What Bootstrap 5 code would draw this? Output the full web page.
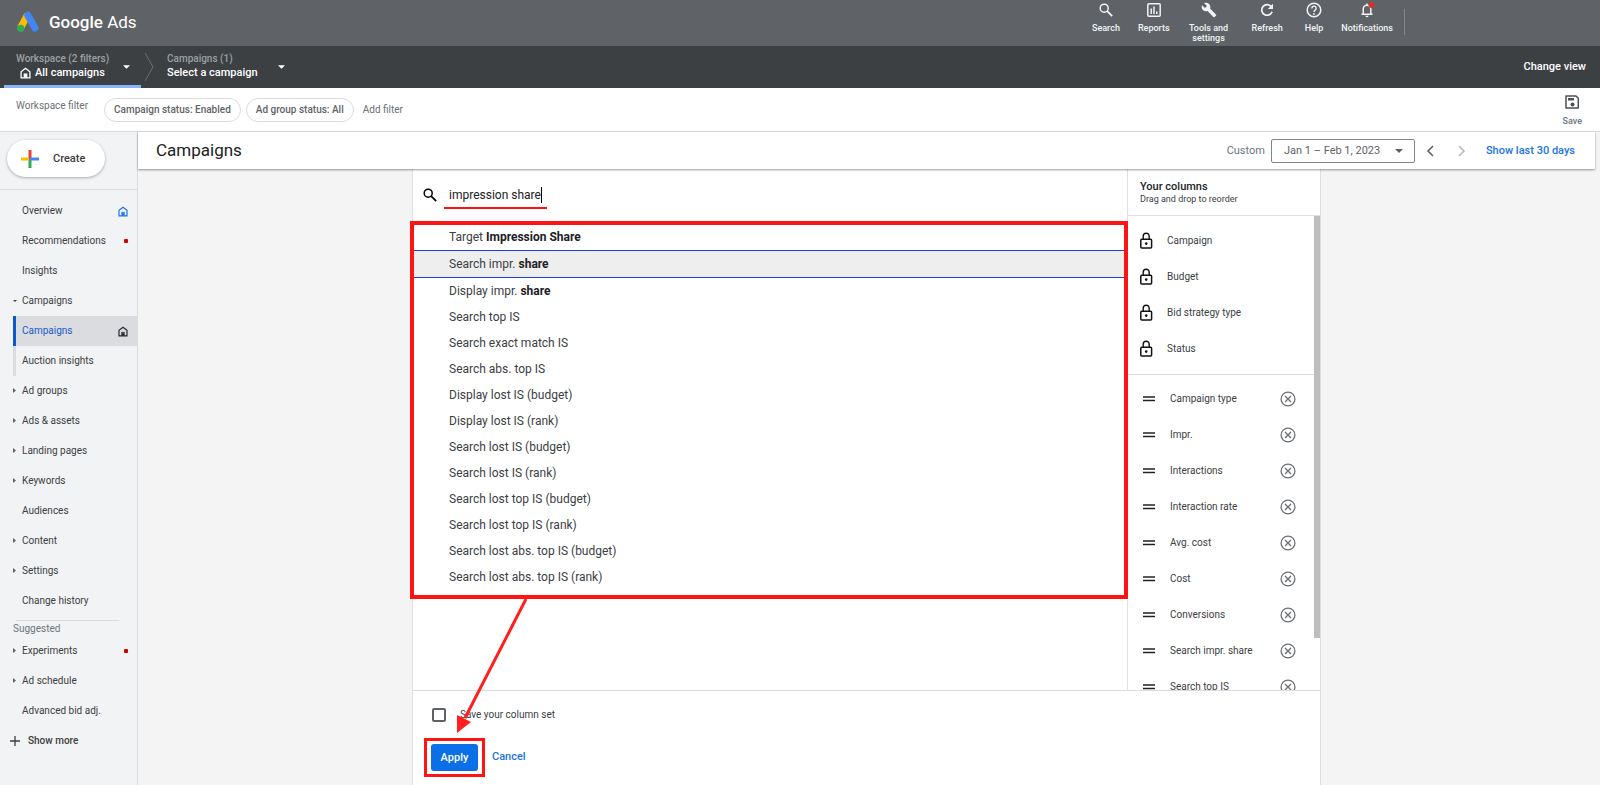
<!DOCTYPE html>
<html lang="en">
<head>
<meta charset="utf-8">
<meta name="viewport" content="width=device-width, initial-scale=1">
<title>Campaigns - Google Ads</title>
<link href="https://cdn.jsdelivr.net/npm/bootstrap@5.3.0/dist/css/bootstrap.min.css" rel="stylesheet">
<style>
body{font-family:Roboto,"Liberation Sans",sans-serif;font-size:10px;line-height:16px;color:#3c4043;height:100vh;overflow:hidden}
button{font:inherit;color:inherit;background:none;border:0;padding:0}
a{text-decoration:none}
svg{display:block;flex:none}
.fw-med{font-weight:500}
.fs-11{font-size:11px}
/* top bar */
.topbar{background:#5f6368;height:46px;color:#f1f3f4;padding:0 195px 0 16px}
.brand{font-size:17px;color:#fff;gap:9px;padding-bottom:2px}
.tools{gap:18px}
.tool{font-size:9px;line-height:10px;font-weight:500;padding-top:2px;gap:5px;color:#f1f3f4}
.tool .tw{width:42px}
.tooldiv{width:1px;height:26px;background:#85898d;margin:9px 0 0 11px}
/* workspace bar */
.scopebar{background:#3c4043;height:42px;color:#fff;padding:0 14px 0 4px}
.scope{height:42px;padding:6px 11px 0 12px;line-height:14px;text-align:left}
.scope small{font-size:10px;color:#9aa0a6;display:block}
.scope .caret{margin-top:13px}
.scope-on{width:137px;border-bottom:3px solid #8ab4f8;border-radius:3px 3px 0 0}
/* filters */
.filters{height:44px;border-bottom:1px solid #dadce0;color:#6b7075;padding:0 18px 0 16px}
.pill{height:24px;border:1px solid #dadce0;border-radius:12px;padding:0 9px;margin-right:5px;color:#5f6368;font-weight:500}
/* side navigation */
.side{width:138px;background:#f1f3f4;border-right:1px solid #dadce0}
.sidenav{padding-top:6px}
.createbox{padding:8px 7px 12px;border-bottom:1px solid #dadce0}
.create{width:98px;height:37px;border-radius:19px;background:#fff;box-shadow:0 1px 3px #3c404366;padding-left:14px;gap:14px;font-size:11px;font-weight:500}
.navrow{height:30px;padding:0 9px 0 13px;color:#3c4043}
.navrow .tri{width:9px}
.navrow .dot{width:4px;height:4px;border-radius:1px;background:#d50000;margin-left:auto}
.navrow svg.home{margin-left:auto}
.navsub{margin-left:13px;padding-left:6px;border-left:3px solid #dadce0}
.navsub.on{background:#dadce0;border-left-color:#1155cc;color:#1a5ac8}
.rule{margin:4px 18px 0 16px;border-top:1px solid #dadce0}
.suggested{padding-left:13px;line-height:15px}
.more{padding-left:10px;gap:8px}
/* page heading */
.stage{background:#f4f4f4;padding-right:5px}
.titlebar{height:37px;background:#fff;box-shadow:0 1px 2px #0006;padding:0 20px 0 18px;z-index:2}
.titlebar h1{font-size:17px;font-weight:400;color:#202124}
.datesel{width:144px;height:24px;border:1px solid #80868b;border-radius:2px;font-size:11px;padding:0 12px;color:#5f6368;line-height:16px;background:#fff url("data:image/svg+xml,%3Csvg xmlns='http://www.w3.org/2000/svg' viewBox='0 0 8 4'%3E%3Cpath d='M0 0h8L4 4z' fill='%235f6368'/%3E%3C/svg%3E") no-repeat right 11px center/8px 4px;margin:0 7px 0 6px}
.blue{color:#1a73e8}
/* column picker */
.picker{max-width:909px;min-height:0;background:#fff;border:solid #e0e0e0;border-width:0 1px}
.finder{height:52px;padding:0 10px;gap:7px}
.findwrap{border-bottom:2px solid #f11;padding:6px 5px 0;height:28px}
.findwrap input{display:block;width:93px;height:16px;border:0;border-right:1px solid #000;padding:0;font-size:12px;color:#202124;outline:0;background:none}
.results{border:4px solid #ff1414;margin:0 -1px 0 -3px;padding-bottom:5px;font-size:12px;color:#3c4043;position:relative;z-index:1}
.results li{line-height:26px;padding-left:35px}
.results li:first-child{line-height:25px}
.results li.cur{background:#eee;border:solid #1a3fc8;border-width:1px 0}
.results b{color:#202124}
.cols{width:193px;border-left:1px solid #e0e0e0}
.colhead{height:47px;border-bottom:1px solid #e0e0e0;padding:11px 12px 0;font-size:9px;line-height:13px}
.collist{overflow:hidden;flex:1 1 0;min-height:0;color:#3c4043}
.locked{padding:7px 0;border-bottom:1px solid #dadce0}
.locked li{height:36px;padding:0 12px 0 11px;gap:14px}
.free{padding-top:6px}
.free li{height:36px;padding:0 18px 0 15px;gap:15px}
.thumb{width:6px;height:422px;background:#bdbdbd}
.pickfoot{height:95px;border-top:1px solid #dadce0;padding:16px 11px 0}
.pickfoot input{appearance:none;width:14px;height:14px;border:2px solid #5f6368;border-radius:2px;margin:0 14px 0 8px}
.ring{border:3px solid #ff1414;padding:3px 4px;margin-top:15px}
.apply{width:47px;height:27px;background:#0b70e8;color:#fff;border-radius:3px;font-size:11px;font-weight:500}
.cancel{margin:14px 0 0 7px}
.arrow{position:absolute;left:39px;top:-92px;z-index:3}
</style>
</head>
<body class="d-flex flex-column">
<svg width="0" height="0" class="position-absolute">
<symbol id="home" viewBox="0 0 12 12"><path d="M1.2 11.2V4.6L6 .9l4.800 3.700v6.600z" fill="none" stroke="currentColor" stroke-width="1.400"/><path d="M4 11V6.500h4V11z" fill="currentColor"/><path d="M5.200 7.700h1.600" stroke="#fff" stroke-width=".6"/></symbol>
<symbol id="search" viewBox="0 0 14 14"><circle cx="5.200" cy="5.200" r="4" fill="none" stroke="currentColor" stroke-width="1.500"/><path d="M8.200 8.200l5 5" stroke="currentColor" stroke-width="1.800"/></symbol>
<symbol id="lock" viewBox="0 0 14 18"><rect x="1.800" y="7.200" width="10.800" height="8.800" rx="1" fill="none" stroke="#111" stroke-width="1.500"/><path d="M4.200 7V4.200a3 3 0 0 1 6 0V7" fill="none" stroke="#111" stroke-width="1.400"/><circle cx="7.200" cy="11.600" r="1.300" fill="#111"/></symbol>
<symbol id="grip" viewBox="0 0 12 6"><path d="M0 1h12M0 4.500h12" stroke="#222" stroke-width="1.400"/></symbol>
<symbol id="remove" viewBox="0 0 16 16"><circle cx="8" cy="8" r="6.900" fill="none" stroke="#6b6f73" stroke-width="1.300"/><path d="M5 5l6 6M11 5l-6 6" stroke="#6b6f73" stroke-width="1.300"/></symbol>
<symbol id="right" viewBox="0 0 4 6"><path d="M0 0l3 2.500L0 5z" fill="#5f6368"/></symbol>
<symbol id="down" viewBox="0 0 8 4"><path d="M0 0h8L4 4z" fill="currentColor"/></symbol>
</svg>

<header class="topbar d-flex flex-shrink-0">
  <a href="#" class="brand d-flex align-items-center me-auto">
    <svg width="24" height="22" viewBox="0 0 24 22"><path d="M11.500 4L4.500 17" stroke="#fbbc04" stroke-width="7"/><path d="M11.800 4.200L19 17" stroke="#4285f4" stroke-width="7" stroke-linecap="round"/><circle cx="4.700" cy="17.300" r="3.600" fill="#34a853"/></svg>
    <span><span class="fw-med">Google</span> Ads</span></a>
  <div class="tools d-flex">
    <button class="tool d-flex flex-column align-items-center"><svg width="16" height="16" viewBox="-1 -1 16 16"><use href="#search" width="14" height="14"/></svg>Search</button>
    <button class="tool d-flex flex-column align-items-center"><svg width="16" height="16" viewBox="0 0 16 16"><rect x="1.800" y="1.800" width="12.400" height="12.400" rx="1" fill="none" stroke="currentColor" stroke-width="1.500"/><path d="M5.200 6.500V12M8 4.500V12M10.800 9.500V12" stroke="currentColor" stroke-width="1.500"/></svg>Reports</button>
    <button class="tool d-flex flex-column align-items-center me-1"><svg width="16" height="16" viewBox="0 0 24 24"><path fill="currentColor" d="M22.700 19l-9.100-9.100c.9-2.300.4-5-1.500-6.900-2-2-5-2.400-7.400-1.300L9 6 6 9 1.600 4.700C.4 7.100.9 10.100 2.900 12.100c1.900 1.900 4.600 2.400 6.900 1.500l9.100 9.100c.4.4 1 .4 1.400 0l2.300-2.300c.5-.4.5-1.100.1-1.400z"/></svg><span class="tw">Tools and settings</span></button>
    <button class="tool d-flex flex-column align-items-center"><svg width="16" height="16" viewBox="0 0 16 16"><path d="M12.300 4.700A5.300 5.300 0 1 0 13.100 9.700" fill="none" stroke="currentColor" stroke-width="1.700"/><path d="M14 1.800V7H8.800z" fill="currentColor"/></svg>Refresh</button>
    <button class="tool d-flex flex-column align-items-center ms-1"><svg width="16" height="16" viewBox="0 0 16 16"><circle cx="8" cy="8" r="6.800" fill="none" stroke="currentColor" stroke-width="1.500"/><path d="M5.800 6.500a2.200 2.200 0 1 1 3.400 1.700C8.300 8.800 8 9.100 8 10" fill="none" stroke="currentColor" stroke-width="1.400"/><circle cx="8" cy="12" r=".9" fill="currentColor"/></svg>Help</button>
    <button class="tool d-flex flex-column align-items-center"><svg width="16" height="16" viewBox="0 0 16 16"><path d="M4.200 12V7a3.800 3.800 0 0 1 7.600 0v5M2.500 12.200h11M8 1.500v2" fill="none" stroke="currentColor" stroke-width="1.500"/><path d="M6.500 13.800h3a1.500 1.500 0 0 1-3 0z" fill="currentColor"/><circle cx="12.500" cy="3" r="3" fill="#d93025"/></svg>Notifications</button>
  </div>
  <div class="tooldiv"></div>
</header>

<nav class="scopebar d-flex flex-shrink-0 align-items-center">
  <button class="scope scope-on d-flex">
    <span class="fs-11 fw-med"><small>Workspace (2 filters)</small><span class="d-flex gap-1 align-items-center"><svg class="ms-1" width="11" height="12"><use href="#home"/></svg>All campaigns</span></span>
    <svg class="ms-auto caret" width="7" height="4"><use href="#down"/></svg></button>
  <svg class="ms-1" width="10" height="30" viewBox="0 0 10 30"><path d="M0 1l8 14-8 14" fill="none" stroke="#6b7075"/></svg>
  <button class="scope d-flex gap-3"><span class="fs-11 fw-med"><small>Campaigns (1)</small>Select a campaign</span><svg class="ms-1 caret" width="7" height="4"><use href="#down"/></svg></button>
  <button class="ms-auto fs-11 fw-med">Change view</button>
</nav>

<div class="filters d-flex flex-shrink-0 align-items-center">
  <span class="pb-2 me-3">Workspace filter</span>
  <button class="pill">Campaign status: Enabled</button>
  <button class="pill">Ad group status: All</button>
  <button class="ms-1">Add filter</button>
  <button class="ms-auto d-flex flex-column align-items-center gap-1"><svg width="16" height="16" viewBox="0 0 16 16"><path d="M2 2h10l2.300 2.300V14H2z" fill="none" stroke="#4d5156" stroke-width="1.500" stroke-linejoin="round"/><path d="M4 4h6v2.500H4z" fill="#4d5156"/><circle cx="8.500" cy="10.500" r="2" fill="#4d5156"/></svg><span class="tool pb-0 text-secondary">Save</span></button>
</div>

<div class="d-flex flex-fill" style="min-height:0">
<aside class="side flex-shrink-0">
  <div class="createbox"><button class="create d-flex align-items-center"><svg width="18" height="18" viewBox="0 0 18 18"><path d="M9 0v9" stroke="#ea4335" stroke-width="3"/><path d="M9 9v9" stroke="#34a853" stroke-width="3"/><path d="M0 9h8" stroke="#fbbc04" stroke-width="3"/><path d="M9 9h9" stroke="#4285f4" stroke-width="3"/></svg>Create</button></div>
  <nav class="sidenav d-flex flex-column">
    <a href="#" class="navrow d-flex align-items-center"><span class="tri"></span>Overview<svg class="home blue" width="10" height="11"><use href="#home"/></svg></a>
    <a href="#" class="navrow d-flex align-items-center"><span class="tri"></span>Recommendations<span class="dot"></span></a>
    <a href="#" class="navrow d-flex align-items-center"><span class="tri"></span>Insights</a>
    <a href="#" class="navrow d-flex align-items-center"><span class="tri"><svg width="4" height="2"><use href="#down"/></svg></span>Campaigns</a>
    <a href="#" class="navrow navsub on d-flex align-items-center">Campaigns<svg class="home text-dark" width="10" height="11"><use href="#home"/></svg></a>
    <a href="#" class="navrow navsub d-flex align-items-center">Auction insights</a>
    <a href="#" class="navrow d-flex align-items-center"><span class="tri"><svg width="4" height="6"><use href="#right"/></svg></span>Ad groups</a>
    <a href="#" class="navrow d-flex align-items-center"><span class="tri"><svg width="4" height="6"><use href="#right"/></svg></span>Ads &amp; assets</a>
    <a href="#" class="navrow d-flex align-items-center"><span class="tri"><svg width="4" height="6"><use href="#right"/></svg></span>Landing pages</a>
    <a href="#" class="navrow d-flex align-items-center"><span class="tri"><svg width="4" height="6"><use href="#right"/></svg></span>Keywords</a>
    <a href="#" class="navrow d-flex align-items-center"><span class="tri"></span>Audiences</a>
    <a href="#" class="navrow d-flex align-items-center"><span class="tri"><svg width="4" height="6"><use href="#right"/></svg></span>Content</a>
    <a href="#" class="navrow d-flex align-items-center"><span class="tri"><svg width="4" height="6"><use href="#right"/></svg></span>Settings</a>
    <a href="#" class="navrow d-flex align-items-center"><span class="tri"></span>Change history</a>
    <div class="rule"></div>
    <span class="text-secondary suggested">Suggested</span>
    <a href="#" class="navrow d-flex align-items-center"><span class="tri"><svg width="4" height="6"><use href="#right"/></svg></span>Experiments<span class="dot"></span></a>
    <a href="#" class="navrow d-flex align-items-center"><span class="tri"><svg width="4" height="6"><use href="#right"/></svg></span>Ad schedule</a>
    <a href="#" class="navrow d-flex align-items-center"><span class="tri"></span>Advanced bid adj.</a>
    <button class="navrow more d-flex align-items-center fw-med"><svg width="10" height="10" viewBox="0 0 10 10"><path d="M5 0v10M0 5h10" stroke="#3c4043" stroke-width="1.300"/></svg>Show more</button>
  </nav>
</aside>

<main class="d-flex flex-column flex-fill stage">
  <div class="titlebar position-relative d-flex align-items-center flex-shrink-0">
    <h1 class="m-0 me-auto">Campaigns</h1>
    <label for="range" class="fs-11 text-secondary">Custom</label>
    <select id="range" class="form-select datesel"><option>Jan 1 – Feb 1, 2023</option></select>
    <button class="px-1" aria-label="Previous"><svg width="8" height="12" viewBox="0 0 8 12"><path d="M7 1L2 6l5 5" fill="none" stroke="#5f6368" stroke-width="1.600"/></svg></button>
    <button class="mx-3 px-1" aria-label="Next"><svg width="8" height="12" viewBox="0 0 8 12"><path d="M1 1l5 5-5 5" fill="none" stroke="#b4b7ba" stroke-width="1.600"/></svg></button>
    <a href="#" class="fs-11 fw-med blue">Show last 30 days</a>
  </div>
  <section class="picker w-100 mx-auto flex-fill d-flex flex-column">
    <div class="d-flex flex-fill" style="min-height:0">
      <div class="flex-fill">
        <div class="finder d-flex align-items-center">
          <svg width="14" height="14" class="text-black"><use href="#search"/></svg>
          <div class="findwrap"><input type="text" value="impression share" aria-label="Search columns"></div>
        </div>
        <ul class="results list-unstyled">
          <li>Target <b>Impression Share</b></li>
          <li class="cur">Search impr. <b>share</b></li>
          <li>Display impr. <b>share</b></li>
          <li>Search top IS</li>
          <li>Search exact match IS</li>
          <li>Search abs. top IS</li>
          <li>Display lost IS (budget)</li>
          <li>Display lost IS (rank)</li>
          <li>Search lost IS (budget)</li>
          <li>Search lost IS (rank)</li>
          <li>Search lost top IS (budget)</li>
          <li>Search lost top IS (rank)</li>
          <li>Search lost abs. top IS (budget)</li>
          <li>Search lost abs. top IS (rank)</li>
        </ul>
      </div>
      <div class="cols d-flex flex-column flex-shrink-0">
        <div class="colhead"><div class="fs-11 fw-med text-dark">Your columns</div>Drag and drop to reorder</div>
        <div class="collist d-flex">
          <div class="flex-fill">
            <ul class="locked list-unstyled m-0">
              <li class="d-flex align-items-center"><svg width="14" height="18"><use href="#lock"/></svg>Campaign</li>
              <li class="d-flex align-items-center"><svg width="14" height="18"><use href="#lock"/></svg>Budget</li>
              <li class="d-flex align-items-center"><svg width="14" height="18"><use href="#lock"/></svg>Bid strategy type</li>
              <li class="d-flex align-items-center"><svg width="14" height="18"><use href="#lock"/></svg>Status</li>
            </ul>
            <ul class="free list-unstyled m-0">
              <li class="d-flex align-items-center"><svg width="12" height="6"><use href="#grip"/></svg>Campaign type<button class="ms-auto" aria-label="Remove"><svg width="16" height="16"><use href="#remove"/></svg></button></li>
              <li class="d-flex align-items-center"><svg width="12" height="6"><use href="#grip"/></svg>Impr.<button class="ms-auto" aria-label="Remove"><svg width="16" height="16"><use href="#remove"/></svg></button></li>
              <li class="d-flex align-items-center"><svg width="12" height="6"><use href="#grip"/></svg>Interactions<button class="ms-auto" aria-label="Remove"><svg width="16" height="16"><use href="#remove"/></svg></button></li>
              <li class="d-flex align-items-center"><svg width="12" height="6"><use href="#grip"/></svg>Interaction rate<button class="ms-auto" aria-label="Remove"><svg width="16" height="16"><use href="#remove"/></svg></button></li>
              <li class="d-flex align-items-center"><svg width="12" height="6"><use href="#grip"/></svg>Avg. cost<button class="ms-auto" aria-label="Remove"><svg width="16" height="16"><use href="#remove"/></svg></button></li>
              <li class="d-flex align-items-center"><svg width="12" height="6"><use href="#grip"/></svg>Cost<button class="ms-auto" aria-label="Remove"><svg width="16" height="16"><use href="#remove"/></svg></button></li>
              <li class="d-flex align-items-center"><svg width="12" height="6"><use href="#grip"/></svg>Conversions<button class="ms-auto" aria-label="Remove"><svg width="16" height="16"><use href="#remove"/></svg></button></li>
              <li class="d-flex align-items-center"><svg width="12" height="6"><use href="#grip"/></svg>Search impr. share<button class="ms-auto" aria-label="Remove"><svg width="16" height="16"><use href="#remove"/></svg></button></li>
              <li class="d-flex align-items-center"><svg width="12" height="6"><use href="#grip"/></svg>Search top IS<button class="ms-auto" aria-label="Remove"><svg width="16" height="16"><use href="#remove"/></svg></button></li>
            </ul>
          </div>
          <div class="thumb"></div>
        </div>
      </div>
    </div>
    <div class="pickfoot position-relative flex-shrink-0">
      <div class="d-flex align-items-center"><input type="checkbox" id="keep"><label for="keep">Save your column set</label></div>
      <div class="d-flex">
        <div class="ring"><button class="apply d-block">Apply</button></div>
        <button class="fs-11 fw-med blue cancel">Cancel</button>
      </div>
      <svg class="arrow" width="80" height="136" viewBox="0 0 80 136"><path d="M74 0L13 119" stroke="#ff1f1f" stroke-width="3"/><path d="M5 134V116l14 7z" fill="#ff1f1f"/></svg>
    </div>
  </section>
</main>
</div>
<script src="https://cdn.jsdelivr.net/npm/bootstrap@5.3.0/dist/js/bootstrap.bundle.min.js"></script>
</body>
</html>
